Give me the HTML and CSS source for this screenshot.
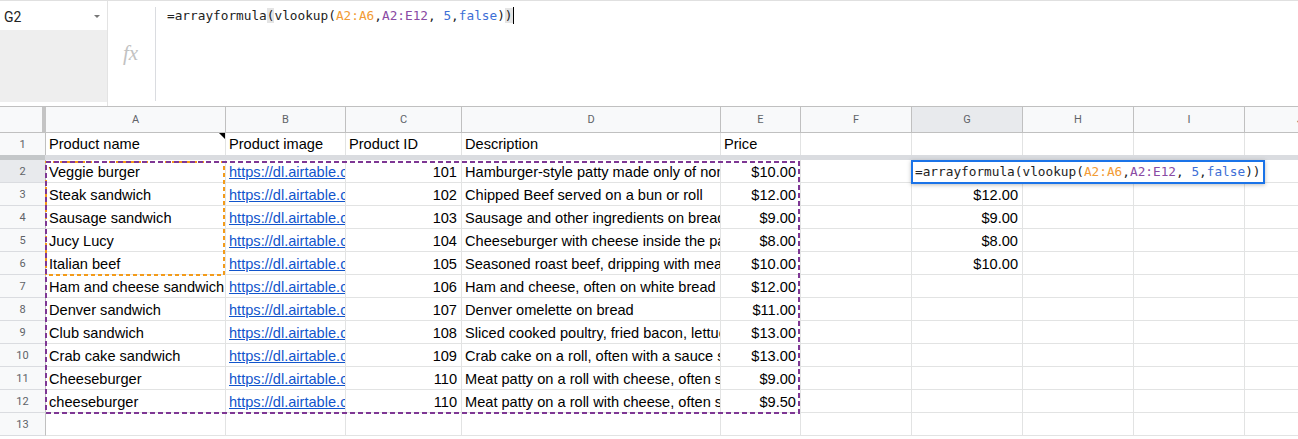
FILE: index.html
```html
<!doctype html>
<html>
<head>
	<meta charset="utf-8">
	<link rel="stylesheet" href="styles.css">
</head>
<body>

<div class="formula-bar">
	<div class="name-col">
		<div class="name-box"><span class="cell-ref">G2</span><span class="caret"></span></div>
		<div class="name-fill"></div>
	</div>
	<div class="fx">fx</div>
	<div class="formula-input"><span class="formula">=arrayformula<span class="match">(</span>vlookup(<span class="r1">A2:A6</span>,<span class="r2">A2:E12</span>, <span class="lit">5</span>,<span class="lit">false</span>)<span class="match">)</span></span><span class="cursor"></span></div>
</div>

<div class="sheet">
	<div class="grid">
		<div class="corner"></div>
		<div class="ch">A</div><div class="ch">B</div><div class="ch">C</div><div class="ch">D</div><div class="ch">E</div>
		<div class="ch">F</div><div class="ch on">G</div><div class="ch">H</div><div class="ch">I</div><div class="ch">J</div>

		<div class="rh top">1</div>
		<div class="c top note">Product name</div><div class="c top">Product image</div><div class="c top">Product ID</div>
		<div class="c top">Description</div><div class="c top">Price</div>
		<div class="c top"></div><div class="c top"></div><div class="c top"></div><div class="c top"></div><div class="c top"></div>

		<div class="freeze"></div>

		<div class="rh on">2</div>
		<div class="c">Veggie burger</div><div class="c"><a class="link">https://dl.airtable.com/.attachments/veggie-burger.jpg</a></div>
		<div class="c num">101</div><div class="c">Hamburger-style patty made only of non-meat ingredients</div><div class="c num">$10.00</div>
		<div class="c"></div><div class="c"></div><div class="c"></div><div class="c"></div><div class="c"></div>

		<div class="rh">3</div>
		<div class="c">Steak sandwich</div><div class="c"><a class="link">https://dl.airtable.com/.attachments/steak-sandwich.jpg</a></div>
		<div class="c num">102</div><div class="c">Chipped Beef served on a bun or roll</div><div class="c num">$12.00</div>
		<div class="c"></div><div class="c num">$12.00</div><div class="c"></div><div class="c"></div><div class="c"></div>

		<div class="rh">4</div>
		<div class="c">Sausage sandwich</div><div class="c"><a class="link">https://dl.airtable.com/.attachments/sausage-sandwich.jpg</a></div>
		<div class="c num">103</div><div class="c">Sausage and other ingredients on bread</div><div class="c num">$9.00</div>
		<div class="c"></div><div class="c num">$9.00</div><div class="c"></div><div class="c"></div><div class="c"></div>

		<div class="rh">5</div>
		<div class="c">Jucy Lucy</div><div class="c"><a class="link">https://dl.airtable.com/.attachments/jucy-lucy.jpg</a></div>
		<div class="c num">104</div><div class="c">Cheeseburger with cheese inside the patty</div><div class="c num">$8.00</div>
		<div class="c"></div><div class="c num">$8.00</div><div class="c"></div><div class="c"></div><div class="c"></div>

		<div class="rh">6</div>
		<div class="c">Italian beef</div><div class="c"><a class="link">https://dl.airtable.com/.attachments/italian-beef.jpg</a></div>
		<div class="c num">105</div><div class="c">Seasoned roast beef, dripping with meat juices</div><div class="c num">$10.00</div>
		<div class="c"></div><div class="c num">$10.00</div><div class="c"></div><div class="c"></div><div class="c"></div>

		<div class="rh">7</div>
		<div class="c">Ham and cheese sandwich</div><div class="c"><a class="link">https://dl.airtable.com/.attachments/ham-and-cheese.jpg</a></div>
		<div class="c num">106</div><div class="c">Ham and cheese, often on white bread</div><div class="c num">$12.00</div>
		<div class="c"></div><div class="c"></div><div class="c"></div><div class="c"></div><div class="c"></div>

		<div class="rh">8</div>
		<div class="c">Denver sandwich</div><div class="c"><a class="link">https://dl.airtable.com/.attachments/denver-sandwich.jpg</a></div>
		<div class="c num">107</div><div class="c">Denver omelette on bread</div><div class="c num">$11.00</div>
		<div class="c"></div><div class="c"></div><div class="c"></div><div class="c"></div><div class="c"></div>

		<div class="rh">9</div>
		<div class="c">Club sandwich</div><div class="c"><a class="link">https://dl.airtable.com/.attachments/club-sandwich.jpg</a></div>
		<div class="c num">108</div><div class="c">Sliced cooked poultry, fried bacon, lettuce, tomato</div><div class="c num">$13.00</div>
		<div class="c"></div><div class="c"></div><div class="c"></div><div class="c"></div><div class="c"></div>

		<div class="rh">10</div>
		<div class="c">Crab cake sandwich</div><div class="c"><a class="link">https://dl.airtable.com/.attachments/crab-cake.jpg</a></div>
		<div class="c num">109</div><div class="c">Crab cake on a roll, often with a sauce such as tartar</div><div class="c num">$13.00</div>
		<div class="c"></div><div class="c"></div><div class="c"></div><div class="c"></div><div class="c"></div>

		<div class="rh">11</div>
		<div class="c">Cheeseburger</div><div class="c"><a class="link">https://dl.airtable.com/.attachments/cheeseburger.jpg</a></div>
		<div class="c num">110</div><div class="c">Meat patty on a roll with cheese, often served with fries</div><div class="c num">$9.00</div>
		<div class="c"></div><div class="c"></div><div class="c"></div><div class="c"></div><div class="c"></div>

		<div class="rh">12</div>
		<div class="c">cheeseburger</div><div class="c"><a class="link">https://dl.airtable.com/.attachments/cheeseburger-2.jpg</a></div>
		<div class="c num">110</div><div class="c">Meat patty on a roll with cheese, often served with fries</div><div class="c num">$9.50</div>
		<div class="c"></div><div class="c"></div><div class="c"></div><div class="c"></div><div class="c"></div>

		<div class="rh">13</div>
		<div class="c"></div><div class="c"></div><div class="c"></div><div class="c"></div><div class="c"></div>
		<div class="c"></div><div class="c"></div><div class="c"></div><div class="c"></div><div class="c"></div>
	</div>

	<!-- ranges referenced by the formula being edited -->
	<svg class="ranges" width="1298" height="333">
		<rect x="46" y="55" width="178" height="113" fill="none" stroke="#f39b1a" stroke-width="2" stroke-dasharray="4 3"/>
		<rect x="46" y="55" width="753" height="251" fill="none" stroke="#7e3794" stroke-width="2" stroke-dasharray="5 3"/>
	</svg>

	<div class="editor"><span class="formula">=arrayformula(vlookup(<span class="r1">A2:A6</span>,<span class="r2">A2:E12</span>, <span class="lit">5</span>,<span class="lit">false</span>))</span></div>
</div>

</body>
</html>
```

FILE: styles.css
```css
body { margin: 0; background: #fff; overflow: hidden; font-family: "Liberation Sans", Arial, sans-serif; color: #000; }

/* formula bar */
.formula-bar { display: flex; height: 105px; border-top: 1px solid #e0e0e0; }
.name-col { width: 108px; border-right: 1px solid #e3e3e3; box-sizing: border-box; }
.name-box { height: 29px; display: flex; align-items: center; padding: 0 7px 0 4px; box-sizing: border-box; }
.cell-ref { flex: 1; font-family: Roboto, sans-serif; font-size: 14px; color: #222; padding-top: 2px; }
.caret { border-left: 3px solid transparent; border-right: 3px solid transparent; border-top: 3px solid #777; margin-top: 2px; }
.name-fill { height: 72px; background: #eeeeee; }
.fx { width: 47px; display: flex; justify-content: center; padding: 40px 2px 0 0; box-sizing: border-box; font-family: "Liberation Serif", serif; font-style: italic; font-size: 21px; color: #c2c2c2; }
.formula-input { margin-top: 6px; height: 94px; border-left: 1px solid #dadce0; padding-left: 11px; font-family: "DejaVu Sans Mono", monospace; font-size: 12.75px; line-height: 17px; color: #222; }
.formula { white-space: pre; }
.match { background: #e4e4e4; }
.r1 { color: #f29b34; }
.r2 { color: #8a4aa3; }
.lit { color: #3d6fd6; }
.cursor { display: inline-block; width: 1px; height: 17px; background: #000; vertical-align: -4px; }

/* sheet */
.sheet { position: relative; border-top: 1px solid #c0c0c0; overflow: hidden; }
.grid { display: grid; grid-template-columns: 46px 180px 120px 116px 259px 80px 111px 111px 111px 111px 111px; grid-template-rows: 26px 22px 5px; grid-auto-rows: 23px; }
.corner { background: #f8f9fa; border-right: 4px solid #c4c4c4; border-bottom: 1px solid #c0c0c0; box-sizing: border-box; }
.ch { background: #f8f9fa; border-right: 1px solid #c0c0c0; border-bottom: 1px solid #c0c0c0; box-sizing: border-box; display: flex; align-items: center; justify-content: center; font-family: Roboto, sans-serif; font-size: 11px; color: #5f6368; }
.rh { background: #f8f9fa; border-right: 1px solid #c0c0c0; border-bottom: 1px solid #dadce0; box-sizing: border-box; display: flex; align-items: center; justify-content: center; font-family: Roboto, sans-serif; font-size: 11px; color: #5f6368; }
.on { background: #e8eaed; }
.c { border-right: 1px solid #e2e3e3; border-bottom: 1px solid #e2e3e3; box-sizing: border-box; padding: 2px 4px 0 3px; font-size: 14.6px; line-height: 21px; white-space: nowrap; overflow: hidden; }
.top { border-bottom: none; }
.c.top { padding-top: 1px; }
.num { text-align: right; }
.link { color: #1155cc; text-decoration: underline; }
.note { position: relative; }
.note::after { content: ""; position: absolute; top: 0; right: 0; border-top: 6px solid #000; border-left: 6px solid transparent; }
.freeze { grid-column: 1 / -1; background: linear-gradient(to right, #c4c7c9 45px, #dadce0 45px); }

/* overlays: copied ranges and the open cell editor */
.ranges { position: absolute; left: 0; top: 0; pointer-events: none; }
.editor { position: absolute; left: 911px; top: 53px; width: 354px; height: 24px; box-sizing: border-box; border: 2px solid #1a73e8; background: #fff; box-shadow: 0 1px 4px rgba(60, 64, 67, .35); padding: 1px 2px 0 2px; font-family: "DejaVu Sans Mono", monospace; font-size: 12.75px; line-height: 18px; color: #222; }
```
